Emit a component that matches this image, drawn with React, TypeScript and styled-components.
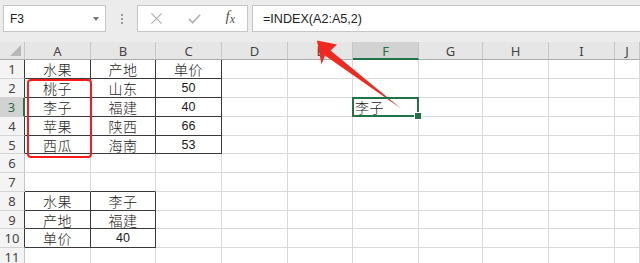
import React from 'react'
import styled, { createGlobalStyle, css } from 'styled-components'

const GlobalStyle = createGlobalStyle`
    html, body {
        margin: 0;
        padding: 0;
        background: #ffffff;
    }
    * {
        box-sizing: border-box;
    }
`

const GREEN = '#217346'
const GRID = '#d9d9d9'
const DARK = '#3a3a3a'

const columns = ['A', 'B', 'C', 'D', 'E', 'F', 'G', 'H', 'I', 'J']
const colWidths = [66, 65, 66, 66, 65, 66, 64, 66, 66]
const rowHeights = [19, 19, 19, 19, 18, 19, 19, 19, 18, 19, 19]

type CellData = { text: string; num?: boolean; left?: boolean }

const data: { [row: number]: { [col: string]: CellData } } = {
    1: { A: { text: '水果' }, B: { text: '产地' }, C: { text: '单价' } },
    2: { A: { text: '桃子' }, B: { text: '山东' }, C: { text: '50', num: true } },
    3: {
        A: { text: '李子' },
        B: { text: '福建' },
        C: { text: '40', num: true },
        F: { text: '李子', left: true },
    },
    4: { A: { text: '苹果' }, B: { text: '陕西' }, C: { text: '66', num: true } },
    5: { A: { text: '西瓜' }, B: { text: '海南' }, C: { text: '53', num: true } },
    8: { A: { text: '水果' }, B: { text: '李子' } },
    9: { A: { text: '产地' }, B: { text: '福建' } },
    10: { A: { text: '单价' }, B: { text: '40', num: true } },
}

// bordered ranges: [firstRow, lastRow, columns]
const tables: [number, number, string[]][] = [
    [1, 5, ['A', 'B', 'C']],
    [8, 10, ['A', 'B']],
]

function inTable(row: number, col: string): boolean {
    return tables.some(([r1, r2, cols]) => row >= r1 && row <= r2 && cols.includes(col))
}

function aboveTable(row: number, col: string): boolean {
    return tables.some(([r1, , cols]) => row === r1 - 1 && cols.includes(col))
}

function tableEdge(row: number): boolean {
    return tables.some(([r1, r2]) => row >= r1 && row <= r2)
}

const selectedRow = 3
const selectedCol = 'F'

function App(): JSX.Element {
    const rows = rowHeights.map((_, i) => i + 1)

    return (
        <Page>
            <GlobalStyle />
            <Toolbar>
                <NameBox>
                    <NameText>F3</NameText>
                    <DropArrow />
                </NameBox>
                <Grip>
                    <Dot />
                    <Dot />
                    <Dot />
                </Grip>
                <ButtonBox>
                    <ToolIcon viewBox="0 0 14 14">
                        <path d="M1.5 1.5 L12.5 12.5 M12.5 1.5 L1.5 12.5" stroke="#b4b4b4" strokeWidth="1.4" fill="none" />
                    </ToolIcon>
                    <ToolIcon viewBox="0 0 14 14">
                        <path d="M1 7.5 L5 11.5 L13 3" stroke="#b4b4b4" strokeWidth="1.8" fill="none" />
                    </ToolIcon>
                    <FxLabel>
                        f<sub>x</sub>
                    </FxLabel>
                </ButtonBox>
                <FormulaBox>=INDEX(A2:A5,2)</FormulaBox>
            </Toolbar>

            <Sheet>
                <Corner>
                    <CornerMark />
                </Corner>
                {columns.map((c, ci) => (
                    <ColHeader key={c} $col={ci + 2} $selected={c === selectedCol}>
                        {c}
                    </ColHeader>
                ))}

                {rows.map((r) => (
                    <React.Fragment key={r}>
                        <RowHeader $row={r + 1} $selected={r === selectedRow} $edge={tableEdge(r)}>
                            {r}
                        </RowHeader>
                        {columns.map((c, ci) => {
                            const cell = data[r]?.[c]
                            return (
                                <Cell
                                    key={c}
                                    $row={r + 1}
                                    $col={ci + 2}
                                    $boxed={inTable(r, c)}
                                    $above={aboveTable(r, c)}
                                    $num={cell?.num}
                                    $left={cell?.left}
                                    $selected={r === selectedRow && c === selectedCol}
                                >
                                    {cell?.text}
                                </Cell>
                            )
                        })}
                    </React.Fragment>
                ))}

                <Highlight />
            </Sheet>

            <Arrow viewBox="0 0 640 263">
                <polygon points="317,40.5 337,44.5 330.5,50.5 401,108.5 325,55.5 321.5,64.5" fill="#f0281e" />
            </Arrow>
        </Page>
    )
}

export default App

const Page = styled.div`
    position: relative;
    width: 640px;
    height: 263px;
    overflow: hidden;
    background: #ffffff;
    font-family: 'Liberation Sans', 'Noto Sans CJK SC', sans-serif;
`

const Toolbar = styled.div`
    display: flex;
    align-items: flex-start;
    height: 42px;
    padding: 5px 0 0 3px;
    background: #ececec;
`

const Box = styled.div`
    height: 27px;
    background: #ffffff;
    border: 1px solid #c6c6c6;
    display: flex;
    align-items: center;
`

const NameBox = styled(Box)`
    width: 103px;
    padding: 0 6px 0 6px;
    justify-content: space-between;
`

const NameText = styled.span`
    font-size: 12px;
    color: #222;
`

const DropArrow = styled.span`
    width: 0;
    height: 0;
    border-left: 3.5px solid transparent;
    border-right: 3.5px solid transparent;
    border-top: 4px solid #777;
    margin-top: 1px;
`

const Grip = styled.div`
    width: 31px;
    height: 27px;
    display: flex;
    flex-direction: column;
    align-items: center;
    justify-content: center;
    gap: 2px;
`

const Dot = styled.span`
    width: 2px;
    height: 2px;
    background: #9a9a9a;
`

const ButtonBox = styled(Box)`
    width: 111px;
    padding: 0 12px 0 12px;
    justify-content: space-between;
`

const ToolIcon = styled.svg`
    width: 13px;
    height: 13px;
`

const FxLabel = styled.span`
    font-family: 'Liberation Serif', serif;
    font-style: italic;
    font-size: 15px;
    color: #555;
    line-height: 1;
    margin-top: -3px;

    sub {
        font-size: 12px;
        vertical-align: -2px;
    }
`

const FormulaBox = styled(Box)`
    flex: 1;
    margin-left: 4px;
    border-right: none;
    padding-left: 10px;
    font-size: 12.6px;
    color: #222;
`

const Sheet = styled.div`
    display: grid;
    grid-template-columns: 25px ${colWidths.map((w) => `${w}px`).join(' ')} 1fr;
    grid-template-rows: 18px ${rowHeights.map((h) => `${h}px`).join(' ')};
    background: #ffffff;
`

const headerText = css`
    display: flex;
    align-items: center;
    justify-content: center;
    font-family: 'Noto Sans', 'Liberation Sans', sans-serif;
    font-size: 13px;
    color: #444;
    background: #e6e6e6;
`

const Corner = styled.div`
    grid-row: 1;
    grid-column: 1;
    position: relative;
    background: #e6e6e6;
    border-right: 1px solid #c6c6c6;
    border-bottom: 1px solid #ababab;
`

const CornerMark = styled.span`
    position: absolute;
    right: 3px;
    bottom: 3px;
    width: 0;
    height: 0;
    border-left: 11px solid transparent;
    border-bottom: 11px solid #b8b8b8;
`

const ColHeader = styled.div<{ $col: number; $selected?: boolean }>`
    ${headerText};
    grid-row: 1;
    grid-column: ${(p) => p.$col};
    border-right: 1px solid #c6c6c6;
    border-bottom: 1px solid #ababab;
    padding-top: 1px;

    ${(p) =>
        p.$selected &&
        css`
            background: #d2d2d2;
            color: ${GREEN};
            border-bottom: 2px solid ${GREEN};
        `}
`

const RowHeader = styled.div<{ $row: number; $selected?: boolean; $edge?: boolean }>`
    ${headerText};
    grid-row: ${(p) => p.$row};
    grid-column: 1;
    background: #f4f4f4;
    border-right: 1px solid ${(p) => (p.$edge ? DARK : '#c6c6c6')};
    border-bottom: 1px solid #d4d4d4;

    ${(p) =>
        p.$selected &&
        css`
            background: #d2d2d2;
            color: ${GREEN};
            border-right: 2px solid ${GREEN};
        `}
`

const Cell = styled.div<{
    $row: number
    $col: number
    $boxed?: boolean
    $above?: boolean
    $num?: boolean
    $left?: boolean
    $selected?: boolean
}>`
    grid-row: ${(p) => p.$row};
    grid-column: ${(p) => p.$col};
    position: relative;
    display: flex;
    align-items: center;
    justify-content: ${(p) => (p.$left ? 'flex-start' : 'center')};
    padding: 0 2px;
    border-right: 1px solid ${(p) => (p.$boxed ? DARK : GRID)};
    border-bottom: 1px solid ${(p) => (p.$boxed || p.$above ? DARK : GRID)};
    font-family: ${(p) =>
        p.$num ? "'Liberation Sans', sans-serif" : "'Noto Sans CJK SC', sans-serif"};
    font-weight: ${(p) => (p.$num ? 400 : 300)};
    font-size: ${(p) => (p.$num ? '12.5px' : '14px')};
    letter-spacing: ${(p) => (p.$num ? '0' : '0.5px')};
    color: #1a1a1a;
    white-space: nowrap;

    ${(p) =>
        p.$selected &&
        css`
            z-index: 2;

            &::before {
                content: '';
                position: absolute;
                left: -1px;
                top: -1px;
                right: -1px;
                bottom: -1px;
                border: 2px solid ${GREEN};
            }

            &::after {
                content: '';
                position: absolute;
                right: -4px;
                bottom: -4px;
                width: 6px;
                height: 6px;
                background: ${GREEN};
                border: 1px solid #ffffff;
            }
        `}
`

const Highlight = styled.div`
    grid-column: 2;
    grid-row: 3 / 7;
    margin: 0 -1px -4px 2px;
    border: 2.5px solid #ff1a1a;
    border-radius: 4px;
    z-index: 3;
    pointer-events: none;
`

const Arrow = styled.svg`
    position: absolute;
    left: 0;
    top: 0;
    width: 640px;
    height: 263px;
    pointer-events: none;
`
